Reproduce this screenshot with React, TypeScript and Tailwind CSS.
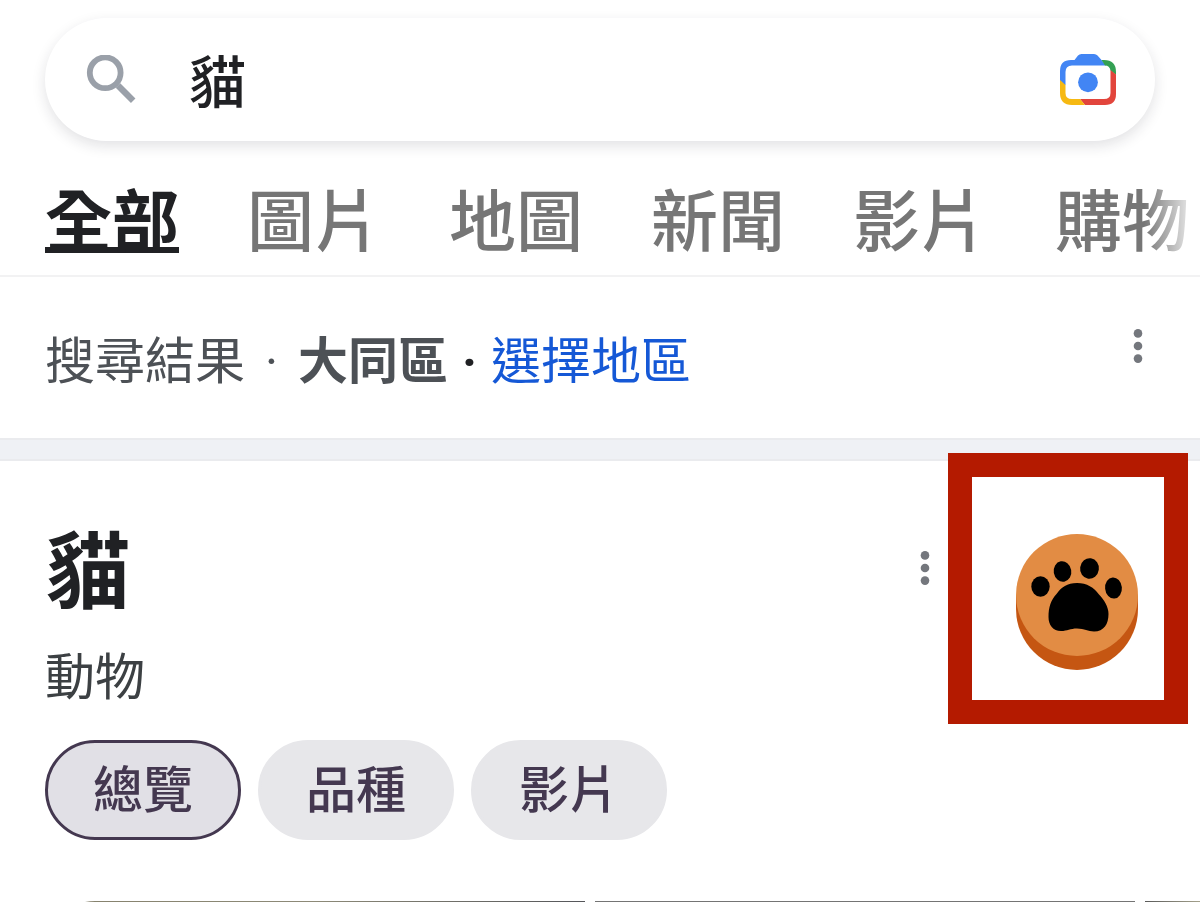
import { useState } from 'react'

/* ─────────────────────────── data ─────────────────────────── */

const TABS = ['全部', '圖片', '地圖', '新聞', '影片', '購物']
const CHIPS = ['總覽', '品種', '影片']

/* ─────────────────────────── icons ─────────────────────────── */

function SearchIcon() {
  return (
    <svg viewBox="0 0 50 50" className="w-[50px] h-[50px]" fill="none" stroke="#9aa0a9" aria-hidden="true">
      <circle cx="19.2" cy="17.8" r="15.4" strokeWidth="5.8" />
      <path d="M32 30.500 L47.200 45.700" strokeWidth="6.4" />
    </svg>
  )
}

function LensIcon() {
  return (
    <svg viewBox="0 0 56 52" className="w-14 h-[52px]" aria-hidden="true">
      <path d="M0 31 V17 Q0 6 11 6 H14.500 L18 1.500 Q19.300 0 21.500 0 H34 Q36.200 0 37.500 1.500 L41.500 6 L46 11.500 H12 Q5.500 11.500 5.500 18 V31 Z" fill="#4285f4" />
      <path d="M41.500 6 H44 Q56 6 56 18 V21 L50.500 16.500 Q49.500 11.500 45 11.500 Z" fill="#34a053" />
      <path d="M50.500 16 L56 20.500 V40 Q56 51 45 51 H25 L20 45 H44 Q50.500 45 50.500 39 Z" fill="#e2453c" />
      <path d="M0 26 L5.500 31 V39 Q5.500 45 12 45 H20 L25 51 H12 Q0 51 0 39 Z" fill="#f6b912" />
      <circle cx="28" cy="28.3" r="9.9" fill="#4285f4" />
    </svg>
  )
}

function DotsIcon() {
  return (
    <svg viewBox="0 0 10 36" className="w-[10px] h-9" fill="#74777d" aria-hidden="true">
      <circle cx="5" cy="5.4" r="4.3" />
      <circle cx="5" cy="18" r="4.3" />
      <circle cx="5" cy="30.6" r="4.3" />
    </svg>
  )
}

function PawIcon() {
  return (
    <svg viewBox="0 0 122 136" className="w-[122px] h-[136px]" aria-hidden="true">
      <path d="M0 61 V75 A61 61 0 0 0 122 75 V61 Z" fill="#c55612" />
      <circle cx="61" cy="61" r="61" fill="#e28c44" />
      <g fill="#000">
        <ellipse cx="24.5" cy="52.5" rx="9.2" ry="10.3" />
        <ellipse cx="46.5" cy="37.5" rx="8.8" ry="10.3" transform="rotate(-10 46.5 37.5)" />
        <ellipse cx="73.5" cy="34.5" rx="9.4" ry="10.3" transform="rotate(8 73.5 34.5)" />
        <ellipse cx="97.5" cy="54" rx="8.4" ry="10.6" transform="rotate(-5 97.5 54)" />
        <path d="M61 49 C71 49 78 53.500 83 60.500 C88 65.500 92.500 73 92.500 80 C92.500 90 88 97.500 78 97.500 C72 97.500 68.500 94.500 61 94.500 C54 94.500 51.500 97 45 97 C37 97 32.500 91 32.500 83 C32.500 73 35 66 40.500 60 C45.500 53 51 49 61 49 Z" />
      </g>
    </svg>
  )
}

/* ─────────────────────────── page ─────────────────────────── */

export default function App() {
  const [query, setQuery] = useState('貓')
  const [chip, setChip] = useState('總覽')

  return (
    <div className="h-screen overflow-hidden bg-white font-['Noto_Sans_CJK_TC',sans-serif] text-[#202124]">

      {/* ── search bar ── */}
      <header className="border-b-2 border-[#f2f2f3]">
        <div className="px-[45px] pt-[18px]">
          <form
            role="search"
            onSubmit={e => e.preventDefault()}
            className="flex items-center h-[123px] pl-[41px] pr-[39px] rounded-full bg-white shadow-[0_5px_14px_rgba(32,33,48,0.13)]"
          >
            <button type="submit" aria-label="搜尋" className="shrink-0">
              <SearchIcon />
            </button>
            <input
              type="text"
              aria-label="搜尋"
              value={query}
              onChange={e => setQuery(e.target.value)}
              className="flex-1 min-w-0 ml-[53px] pb-1 text-[57px] leading-[84px] font-medium outline-none"
            />
            <button type="button" aria-label="以圖搜尋" className="shrink-0">
              <LensIcon />
            </button>
          </form>
        </div>

        {/* tabs, fading out at the right edge */}
        <nav className="relative overflow-hidden">
          <div className="flex gap-[68px] px-[45px] pt-9 pb-[18px] text-[67px] leading-[80px] whitespace-nowrap">
            {TABS.map((tab, i) => (
              <a
                key={tab}
                href="#"
                className={i === 0
                  ? 'font-bold underline decoration-[6px] underline-offset-1 [text-decoration-skip-ink:none]'
                  : 'font-medium text-[#767676]'}
              >
                {tab}
              </a>
            ))}
          </div>
          <div className="absolute inset-y-0 right-0 w-14 bg-linear-to-r from-white/0 to-white pointer-events-none" />
        </nav>
      </header>

      {/* ── location ── */}
      <section className="flex items-start justify-between py-11 pl-[45px] pr-[57px]">
        <p className="flex items-baseline text-[50px] leading-[73px] text-[#4d5156] whitespace-nowrap">
          <span>搜尋結果</span>
          <span className="w-[53px] text-center leading-none font-['Roboto',sans-serif]">·</span>
          <b className="font-bold">大同區</b>
          <span className="w-[43px] text-center leading-none font-['Roboto',sans-serif] font-bold text-[#202124]">·</span>
          <a href="#" className="text-[#1558d6]">選擇地區</a>
        </p>
        <button type="button" aria-label="更多選項" className="flex items-center h-[50px]">
          <DotsIcon />
        </button>
      </section>

      <div className="h-[23px] bg-[#eff1f5] border-y-2 border-[#eaebee]" />

      {/* ── knowledge panel ── */}
      <section className="relative pt-[55px]">
        <div className="flex items-start justify-between pl-[46px] pr-[270px]">
          <h1 className="text-[84px] leading-[100px] font-bold">貓</h1>
          <button type="button" aria-label="更多選項" className="flex items-center h-[104px]">
            <DotsIcon />
          </button>
        </div>
        <p className="mt-[23px] pl-[45px] text-[50px] leading-[60px] text-[#3c4043]">動物</p>

        <div className="flex gap-[17px] mt-[37px] pl-[45px]">
          {CHIPS.map(name => (
            <button
              key={name}
              type="button"
              onClick={() => setChip(name)}
              className={`h-[100px] px-[45px] pb-2 rounded-full border-3 text-[50px] leading-[60px] font-medium text-[#443850] ${
                chip === name ? 'bg-[#e1e0e6] border-[#443850]' : 'bg-[#e7e7ea] border-[#e7e7ea]'
              }`}
            >
              {name}
            </button>
          ))}
        </div>

        {/* paw button inside its frame */}
        <div className="absolute right-3 -top-2 border-[24px] border-[#b41a00] bg-white">
          <button type="button" aria-label="貓掌" className="block pt-[57px] pb-[30px] pl-[44px] pr-[26px]">
            <PawIcon />
          </button>
        </div>
      </section>

      {/* ── photo strip ── */}
      <div className="flex gap-[10px] mt-[61px] ml-[45px]">
        <div className="shrink-0 w-[540px] h-[300px] rounded-tl-[50px] bg-linear-to-r from-[#85816c] via-[#8d8a78] to-[#55565a]" />
        <div className="shrink-0 w-[540px] h-[300px] bg-[#747474]" />
        <div className="flex-1 h-[300px] bg-linear-to-r from-[#5a5a5a] to-[#a5a28c]" />
      </div>
    </div>
  )
}
